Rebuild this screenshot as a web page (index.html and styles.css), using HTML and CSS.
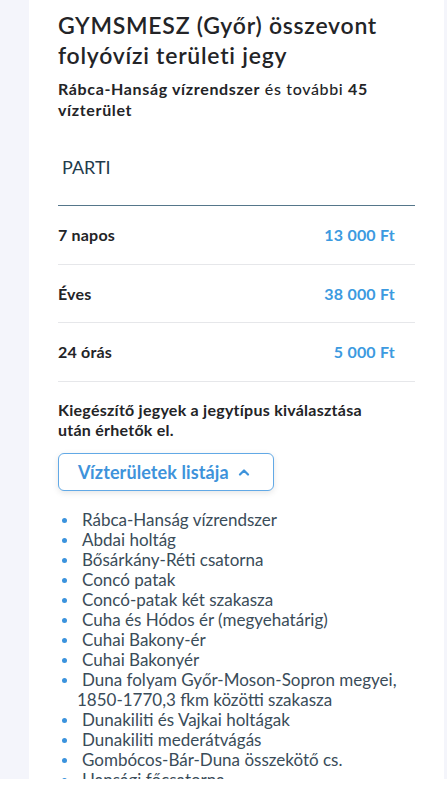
FILE: index.html
```html
<!DOCTYPE html>
<html lang="hu">
<head>
<meta charset="utf-8">
<link rel="stylesheet" href="styles.css">
</head>
<body>
<div class="page">
  <div class="card">
    <h1 class="title">GYMSMESZ (Győr) összevont folyóvízi területi jegy</h1>
    <p class="subtitle"><b>Rábca-Hanság vízrendszer</b> és további <b>45 vízterület</b></p>
    <div class="group">PARTI</div>
    <div class="rows">
      <div class="row"><span class="name">7 napos</span><span class="price">13 000 Ft</span></div>
      <div class="row"><span class="name">Éves</span><span class="price">38 000 Ft</span></div>
      <div class="row"><span class="name">24 órás</span><span class="price">5 000 Ft</span></div>
    </div>
    <p class="note">Kiegészítő jegyek a jegytípus kiválasztása után érhetők el.</p>
    <button class="toggle">Vízterületek listája
      <svg class="chev" width="12" height="8" viewBox="0 0 12 8"><path d="M2 6.5 L6 2.5 L10 6.5" fill="none" stroke="currentColor" stroke-width="2.2" stroke-linecap="round" stroke-linejoin="round"/></svg>
    </button>
    <ul class="waters">
      <li>Rábca-Hanság vízrendszer</li>
      <li>Abdai holtág</li>
      <li>Bősárkány-Réti csatorna</li>
      <li>Concó patak</li>
      <li>Concó-patak két szakasza</li>
      <li>Cuha és Hódos ér (megyehatárig)</li>
      <li>Cuhai Bakony-ér</li>
      <li>Cuhai Bakonyér</li>
      <li>Duna folyam Győr-Moson-Sopron megyei, 1850-1770,3 fkm közötti szakasza</li>
      <li>Dunakiliti és Vajkai holtágak</li>
      <li>Dunakiliti mederátvágás</li>
      <li>Gombócos-Bár-Duna összekötő cs.</li>
      <li>Hansági főcsatorna</li>
      <li>Keszegéri holtág</li>
    </ul>
  </div>
</div>
</body>
</html>
```

FILE: styles.css
```css
* { box-sizing: border-box; }
html, body { margin: 0; padding: 0; background: #ffffff; }
body { font-family: Lato, "Noto Sans", sans-serif; color: #222428; }

.page {
  height: 779px;
  overflow: hidden;
  background: #f4f5fb;
  padding: 0 3px 0 29px;
}
.card {
  background: #ffffff;
  min-height: 100%;
  padding: 10px 29px 0 29px;
}
.title {
  margin: 0;
  font-size: 23px;
  line-height: 30px;
  font-weight: 600;
  letter-spacing: 0.75px;
  color: #232427;
}
.subtitle {
  margin: 8px 0 0 0;
  font-size: 16px;
  line-height: 21px;
  font-weight: 500;
  letter-spacing: 0.65px;
  color: #232427;
}
.subtitle b { font-weight: 700; }
.group {
  margin-top: 35px;
  padding: 0 4px 26px;
  font-size: 18px;
  line-height: 24px;
  color: #1e3a4c;
  border-bottom: 1px solid #55768a;
}
.row {
  display: flex;
  justify-content: space-between;
  align-items: center;
  height: 58.6px;
  padding-right: 20px;
  border-bottom: 1px solid #e6e7ea;
  font-size: 16px;
  font-weight: 700;
  letter-spacing: 0.2px;
}
.name { color: #232427; }
.price { color: #3c9ae0; }
.note {
  margin: 18px 0 0 0;
  padding-right: 30px;
  font-size: 16px;
  line-height: 20px;
  font-weight: 700;
  letter-spacing: 0.25px;
  color: #232427;
}
.toggle {
  display: flex;
  align-items: center;
  gap: 9px;
  margin-top: 13px;
  width: 216px;
  height: 38px;
  padding: 0 0 0 19px;
  background: #ffffff;
  border: 1px solid #62a9e6;
  border-radius: 6px;
  box-shadow: 0 2px 6px rgba(0, 0, 0, 0.10);
  font-family: inherit;
  font-size: 18px;
  font-weight: 700;
  letter-spacing: 0.1px;
  color: #3e93db;
}
.chev { color: #3e93db; }
.waters {
  list-style: none;
  margin: 19px 0 0 0;
  padding: 0;
  font-size: 17px;
  line-height: 20px;
  color: #3a4c59;
}
.waters li {
  position: relative;
  padding-left: 19px;
  text-indent: 5px;
}
.waters li::before {
  content: "";
  position: absolute;
  left: 4px;
  top: 8px;
  width: 5px;
  height: 5px;
  border-radius: 50%;
  background: #3b93dd;
}
```
